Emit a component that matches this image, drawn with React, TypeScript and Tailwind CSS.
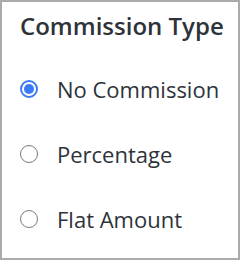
import React from "react";

const options = ["No Commission", "Percentage", "Flat Amount"];

function Radio({ checked }: { checked: boolean }) {
  return checked ? (
    <span className="flex h-[18px] w-[18px] shrink-0 items-center justify-center rounded-full border-2 border-[#3b7bf6] bg-white">
      <span className="h-[10px] w-[10px] rounded-full bg-[#3b7bf6]" />
    </span>
  ) : (
    <span className="h-[18px] w-[18px] shrink-0 rounded-full border-[1.5px] border-[#7a7a7a] bg-white" />
  );
}

export default function App() {
  return (
    <div
      className="box-border flex h-[260px] w-[240px] flex-col border-2 border-[#ababab] bg-white text-[#2e333a]"
      style={{ fontFamily: '"Open Sans", sans-serif' }}
    >
      <div className="pl-[18px] pt-[8px] text-[24px] font-semibold leading-[32px]">Commission Type</div>
      <div className="mt-[32px] flex flex-col gap-[35px] pl-[18px]">
        {options.map((o, i) => (
          <div key={o} className="flex h-[30px] items-center gap-[19px]">
            <Radio checked={i === 0} />
            <span className="text-[22px] leading-[30px]">{o}</span>
          </div>
        ))}
      </div>
    </div>
  );
}
